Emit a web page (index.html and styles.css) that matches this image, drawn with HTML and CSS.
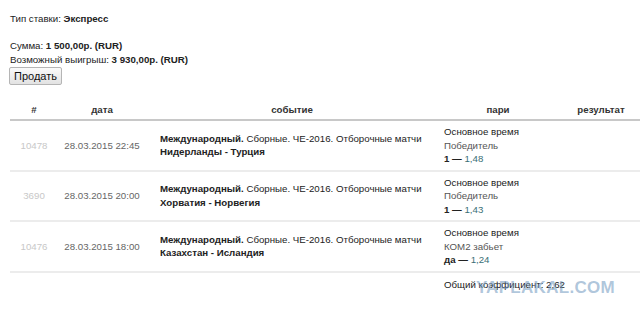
FILE: index.html
```html
<!DOCTYPE html>
<html>
<head>
<meta charset="utf-8">
<link rel="stylesheet" href="styles.css">
</head>
<body>
<div class="page">
  <p class="line type">Тип ставки: <b>Экспресс</b></p>
  <p class="line sum">Сумма: <b>1 500,00р. (RUR)</b></p>
  <p class="line">Возможный выигрыш: <b>3 930,00р. (RUR)</b></p>
  <button class="sell">Продать</button>
  <table class="bets">
    <thead>
      <tr>
        <th class="c-num">#</th>
        <th class="c-date">дата</th>
        <th class="c-event">событие</th>
        <th class="c-pari">пари</th>
        <th class="c-res">результат</th>
      </tr>
    </thead>
    <tbody>
      <tr>
        <td class="c-num id">10478</td>
        <td class="c-date date">28.03.2015 22:45</td>
        <td class="c-event ev"><b>Международный.</b> Сборные. ЧЕ-2016. Отборочные матчи<br><b>Нидерланды - Турция</b></td>
        <td class="c-pari"><span class="pt">Основное время</span><br><span class="outcome">Победитель</span><br><b>1 —</b> <span class="odd">1,48</span></td>
        <td class="c-res"></td>
      </tr>
      <tr>
        <td class="c-num id">3690</td>
        <td class="c-date date">28.03.2015 20:00</td>
        <td class="c-event ev"><b>Международный.</b> Сборные. ЧЕ-2016. Отборочные матчи<br><b>Хорватия - Норвегия</b></td>
        <td class="c-pari"><span class="pt">Основное время</span><br><span class="outcome">Победитель</span><br><b>1 —</b> <span class="odd">1,43</span></td>
        <td class="c-res"></td>
      </tr>
      <tr>
        <td class="c-num id">10476</td>
        <td class="c-date date">28.03.2015 18:00</td>
        <td class="c-event ev"><b>Международный.</b> Сборные. ЧЕ-2016. Отборочные матчи<br><b>Казахстан - Исландия</b></td>
        <td class="c-pari"><span class="pt">Основное время</span><br><span class="outcome">КОМ2 забьет</span><br><b>да —</b> <span class="odd">1,24</span></td>
        <td class="c-res"></td>
      </tr>
    </tbody>
    <tfoot>
      <tr>
        <td colspan="3"></td>
        <td class="c-pari total" colspan="2"><span class="total-wrap">Общий коэффициент: 2,62<span class="watermark">YAPLAKAL.COM</span></span></td>
      </tr>
    </tfoot>
  </table>
</div>
</body>
</html>
```
FILE: styles.css
```css
html, body {
  margin: 0;
  padding: 0;
  background: #fff;
  overflow: hidden;
}
.page {
  padding: 12px 0 0 10px;
  font-family: "Liberation Sans", Arial, sans-serif;
  font-size: 9.7px;
  color: #222;
}
.line {
  margin: 0;
  line-height: 14px;
}
.type {
  margin-bottom: 13px;
}
.sell {
  display: block;
  margin: 0 0 0 -1px;
  height: 18px;
  width: 53px;
  padding: 0;
  font-family: "Liberation Sans", Arial, sans-serif;
  font-size: 11px;
  color: #111;
  background: linear-gradient(#fafafa, #e2e2e2);
  border: 1px solid #b5b5b5;
  border-radius: 2px;
}
.bets {
  margin-top: 11px;
  width: 636px;
  table-layout: fixed;
  border-collapse: collapse;
  font-size: 9.7px;
}
.bets th {
  font-weight: bold;
  color: #333;
  height: 19px;
  padding: 0 0 4px;
  vertical-align: bottom;
  border-bottom: 2px solid #c8c8c8;
}
.bets td {
  vertical-align: middle;
  padding: 4px 0 4px;
  line-height: 13.5px;
  border-bottom: 2px solid #ececec;
  white-space: nowrap;
}
.bets tfoot td {
  border-bottom: none;
  padding-top: 5px;
}
.c-num { width: 48px; text-align: center; }
.c-date { width: 88px; text-align: center; }
.c-event { width: 292px; text-align: center; }
.c-pari { width: 120px; text-align: center; }
.c-res { text-align: center; }
.bets th.c-res { padding-right: 2px; }
.bets td.c-event, .bets td.c-pari {
  text-align: left;
}
.bets td.c-event { padding-left: 14px; }
.bets td.c-pari { padding-left: 6px; }
.id { color: #c8c8c8; }
.date { color: #666; }
.ev { color: #222; }
.pt { color: #222; }
.outcome { color: #555; }
.odd { color: #3a6f76; }
.total { color: #222; }
.total-wrap {
  position: relative;
}
.watermark {
  position: absolute;
  left: 32px;
  top: 2px;
  line-height: 13px;
  font-size: 17px;
  font-weight: bold;
  letter-spacing: 0.3px;
  color: rgba(110, 150, 190, 0.55);
}
```
